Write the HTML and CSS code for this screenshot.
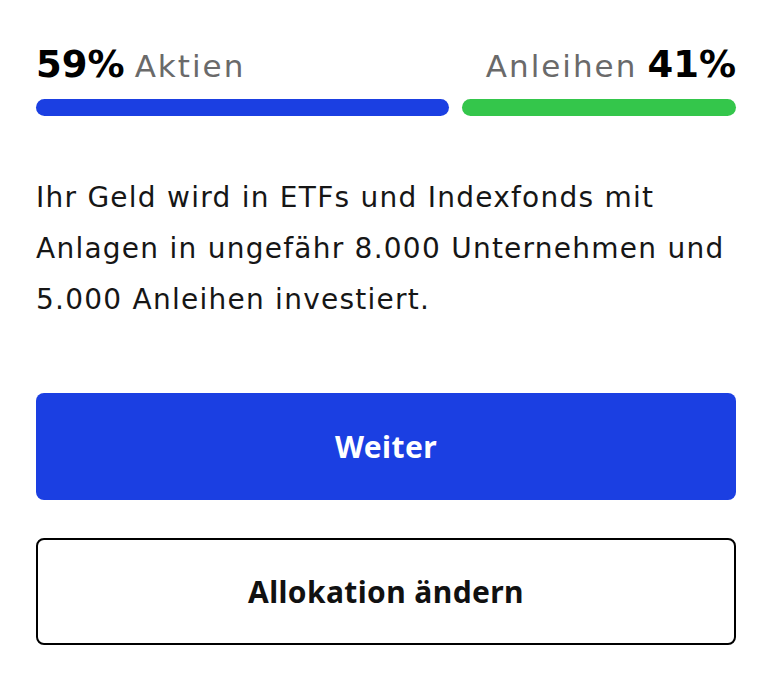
FILE: index.html
```html
<!DOCTYPE html>
<html lang="de">
<head>
<meta charset="utf-8">
<link rel="stylesheet" href="styles.css">
</head>
<body>
<main class="page">
  <div class="alloc-head">
    <div class="label"><span class="pct">59%</span> <span class="name">Aktien</span></div>
    <div class="label"><span class="name">Anleihen</span> <span class="pct">41%</span></div>
  </div>
  <div class="bars">
    <div class="bar bar-stocks" style="width:59%"></div>
    <div class="bar bar-bonds"></div>
  </div>
  <p class="desc">Ihr Geld wird in ETFs und Indexfonds mit Anlagen in ungefähr 8.000 Unternehmen und 5.000 Anleihen investiert.</p>
  <div class="actions">
    <button class="btn btn-primary">Weiter</button>
    <button class="btn btn-outline">Allokation ändern</button>
  </div>
</main>
</body>
</html>
```

FILE: styles.css
```css
html, body {
  margin: 0;
  padding: 0;
  background: #ffffff;
}
.page {
  width: 700px;
  padding: 39px 0 0 36px;
  font-family: "DejaVu Sans", "Liberation Sans", sans-serif;
  color: #161616;
}
.alloc-head {
  display: flex;
  justify-content: space-between;
  align-items: baseline;
  height: 52px;
  line-height: 52px;
}
.label {
  white-space: nowrap;
  word-spacing: 5px;
}
.pct {
  font-weight: 700;
  font-size: 37px;
  color: #000;
}
.name {
  font-size: 31px;
  color: #6a6a6a;
  letter-spacing: 2px;
}
.bars {
  display: flex;
  gap: 13px;
  margin-top: 8px;
}
.bar {
  height: 17px;
  border-radius: 9px;
}
.bar-stocks {
  background: #1b3fe2;
}
.bar-bonds {
  flex: 1;
  background: #34c64b;
}
.desc {
  margin: 56px 0 0;
  font-size: 28px;
  line-height: 51px;
  letter-spacing: 1.25px;
  color: #161616;
}
.actions {
  display: flex;
  flex-direction: column;
  gap: 38px;
  margin-top: 68px;
}
.btn {
  display: block;
  width: 100%;
  height: 107px;
  border-radius: 8px;
  font-family: "Noto Sans", "Liberation Sans", sans-serif;
  font-weight: 700;
  font-size: 30px;
  letter-spacing: 0.4px;
  cursor: pointer;
}
.btn-primary {
  background: #1b3fe2;
  color: #fff;
  border: none;
}
.btn-outline {
  background: #fff;
  color: #111;
  border: 2px solid #000;
}
```
